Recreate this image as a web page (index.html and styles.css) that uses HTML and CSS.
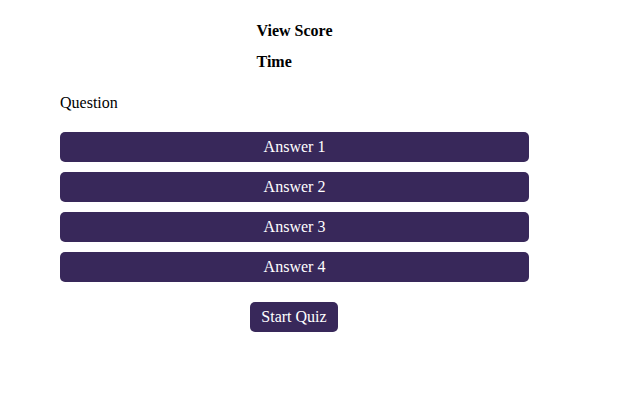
FILE: index.html
```html
<!DOCTYPE html>
<html>
<head>
<meta charset="utf-8">
<link rel="stylesheet" href="styles.css">
</head>
<body>
<div class="quiz">
  <div class="header">
    <div class="header-inner">
      <div class="label">View Score</div>
      <div class="label">Time</div>
    </div>
  </div>
  <div class="question">Question</div>
  <div class="answers">
    <button class="btn answer">Answer 1</button>
    <button class="btn answer">Answer 2</button>
    <button class="btn answer">Answer 3</button>
    <button class="btn answer">Answer 4</button>
  </div>
  <div class="controls">
    <button class="btn start">Start Quiz</button>
  </div>
</div>
</body>
</html>
```
FILE: styles.css
```css
html, body {
  margin: 0;
  padding: 0;
  background: #ffffff;
}
body {
  font-family: "Liberation Serif", "Times New Roman", serif;
  font-size: 16px;
  color: #000;
}
.quiz {
  width: 469px;
  margin-left: 60px;
  padding-top: 22px;
  display: flex;
  flex-direction: column;
}
.header {
  display: flex;
  justify-content: center;
}
.header-inner {
  display: flex;
  flex-direction: column;
  gap: 13px;
}
.label {
  font-weight: bold;
  line-height: 18px;
}
.question {
  margin-top: 23px;
  line-height: 18px;
}
.answers {
  margin-top: 20px;
  display: flex;
  flex-direction: column;
  gap: 10px;
}
.btn {
  font-family: "Liberation Serif", "Times New Roman", serif;
  font-size: 16px;
  color: #ffffff;
  background: #38285a;
  border: none;
  border-radius: 5px;
  height: 30px;
  padding: 0;
}
.answer {
  width: 100%;
}
.controls {
  margin-top: 20px;
  display: flex;
  justify-content: flex-start;
  padding-left: 190px;
}
.start {
  width: 88px;
}
```
